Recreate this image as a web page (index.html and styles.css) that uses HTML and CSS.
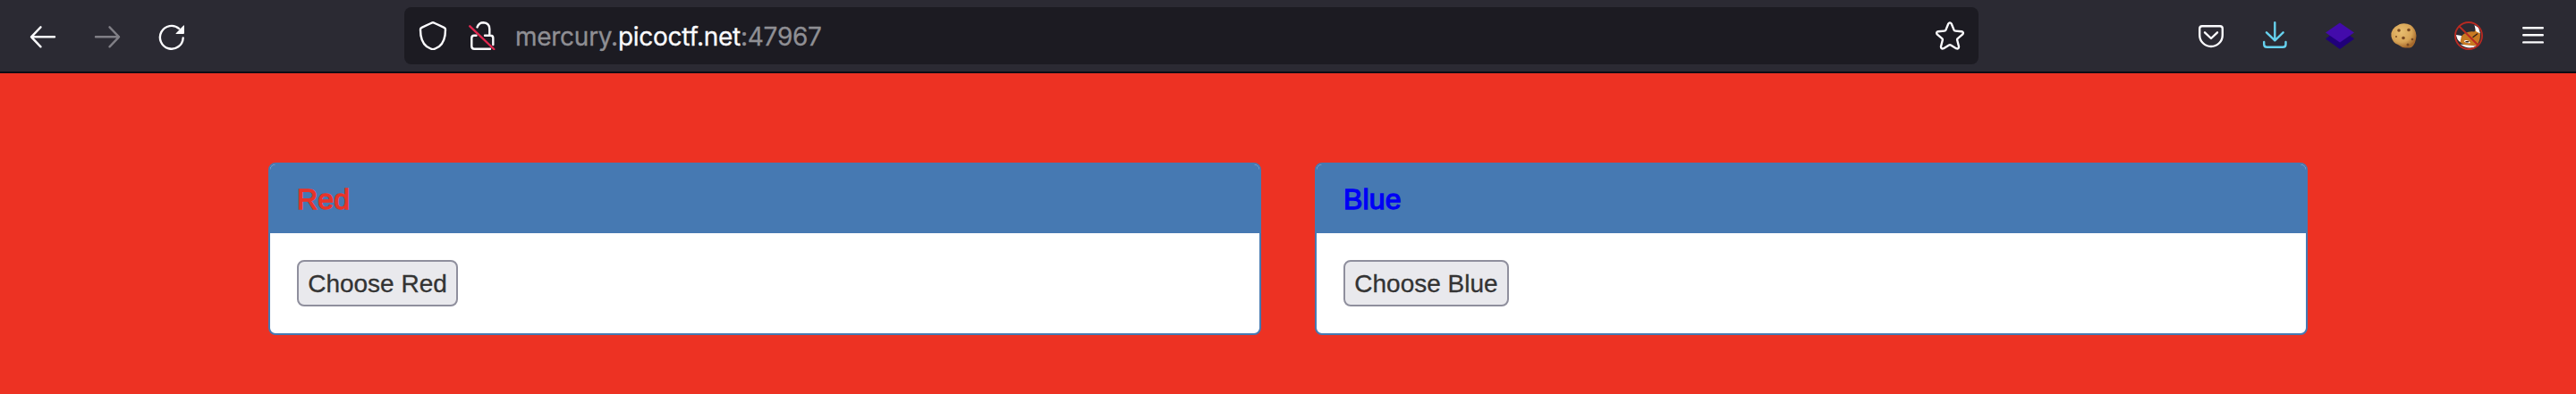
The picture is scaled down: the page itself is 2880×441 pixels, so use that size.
FILE: index.html
```html
<!DOCTYPE html>
<html lang="en">
<head>
<meta charset="utf-8">
<title>mercury.picoctf.net:47967</title>
<link rel="stylesheet" href="styles.css">
</head>
<body>
<header class="toolbar">
  <nav class="nav">
    <svg class="icon" viewBox="0 0 32 32"><path d="M29 17.300H3M13.500 6.300L3 17.300l10.500 11"/></svg>
    <svg class="icon dim" viewBox="0 0 32 32"><path d="M3 17.300h26M18.500 6.300L29 17.300l-10.500 11"/></svg>
    <svg class="icon" viewBox="0 0 32 32"><path d="M28.700 18.500A12.900 12.900 0 1 1 24.300 8.100"/><path class="solid" d="M20.500 13.600 29.200 4.400q.8-.5.800.5v8q0 1-1 1h-8q-1.100 0-.5-.8z"/></svg>
  </nav>
  <div class="urlbar">
    <svg class="icon" viewBox="0 0 32 32"><path d="M16 1.300Q16.700 1.300 28.500 6.800Q30 7.500 30 9C30 18 27.500 24.500 23 28Q18 31.200 16 31.200T9 28C4.500 24.500 2 18 2 9Q2 7.500 3.500 6.800Q15.300 1.300 16 1.300z"/></svg>
    <svg class="icon lock" viewBox="0 0 32 32"><path d="M11.500 6.500Q13.500 1.300 18.500 1.300Q25.300 1.800 25.300 8.500V15.500M10.500 15.800H8Q5.300 15.800 5.300 18.500V27.700Q5.300 30.700 8.300 30.700H26M20 15.800H26.500Q29.300 15.800 29.300 18.500V26"/><path class="strike" d="M3.300 5.300 30.300 31"/></svg>
    <div class="address">mercury.<span class="domain">picoctf.net</span>:47967</div>
    <svg class="icon star" viewBox="0 0 32 32"><path d="M14.200 2.700Q16 0 17.800 2.700L20.500 9.400Q21 10.500 22.200 10.600L29 11.200Q32.200 12 30 14.700L24.700 19.200Q23.900 20 24.200 21L26 28Q26.200 31.200 23 30.200L17 26.500Q16 26 15 26.500L9 30.200Q5.800 31.200 6 28L7.800 21Q8.100 20 7.300 19.200L2 14.700Q-.2 12 3 11.200L9.800 10.600Q11 10.500 11.500 9.400z"/></svg>
  </div>
  <div class="extensions">
    <svg class="icon" viewBox="0 0 32 32"><path d="M6 5.200H26Q28.800 5.200 28.800 8V15.200A12.800 12.800 0 0 1 3.200 15.200V8Q3.200 5.200 6 5.200zM9 12.300 16 19 23 12.300"/></svg>
    <svg class="icon download" viewBox="0 0 32 32"><path d="M15.300 1.200V21M6 12.300 15.300 21.300 24.600 12.300M3.200 23V25.500Q3.200 28.800 6.500 28.800H24.200Q27.500 28.800 27.500 25.500V23"/></svg>
    <svg class="icon art" viewBox="0 0 32 32"><path fill="#20007a" d="M0 19.500 5 15.500H27L32 19.500 16 31z"/><path fill="#430bab" d="M16 1.500 32 12.500 16 23.500 0 12.500z"/></svg>
    <svg class="icon art" viewBox="0 0 32 32"><defs><radialGradient id="dough" cx=".4" cy=".35" r=".65"><stop offset="0" stop-color="#e8be70"/><stop offset=".65" stop-color="#d7a456"/><stop offset="1" stop-color="#a5692c"/></radialGradient></defs><path fill="url(#dough)" d="M11 3Q17 1 23 4Q29 8 29.500 16Q29 25 24 29Q20 30 14 29L9 26Q3 24 1.500 17Q0 8 11 3z"/><g fill="#7a4a22"><circle cx="10" cy="10" r="1.800"/><circle cx="21" cy="9.500" r="1.800"/><circle cx="15" cy="18.500" r="1.800"/><circle cx="25" cy="20" r="1.300"/><circle cx="7" cy="17" r="1"/><circle cx="20" cy="26" r="1.500"/></g></svg>
    <svg class="icon art" viewBox="0 0 32 32"><path fill="#c87922" d="M7 17.500Q13 10 22.500 11.500L24 8.500 29 14Q29 22 25 27L15 27.500Q10 26.500 5.500 22.500z"/><path fill="#fff" d="M22.500 4 27 7 29 13.500 24 11zM2 15 8 16 6.500 23Q2.500 20 2 15zM6.500 25.500 14 26.500 25 27.500Q16 32.500 6.500 25.500z"/><path fill="#fff" d="M10.500 22Q14.500 19.500 18 24Q13 24.800 10.500 22z"/><path d="M13 22.800h2.500M21 17.500l4.500-3.500" stroke="#35221a" stroke-width="1.500"/><g fill="none" stroke="#b82a22" stroke-width="1.900"><circle cx="16" cy="16" r="15"/><path d="M5.500 5.500 26.500 26.500"/></g></svg>
    <svg class="icon" viewBox="0 0 32 32"><path d="M5.200 7.300H26.800M5.200 15.300H26.800M5.200 23.400H26.800"/></svg>
  </div>
</header>
<main class="page">
  <section class="panel">
    <h3 class="panel-heading red">Red</h3>
    <div class="panel-body"><button class="choice">Choose Red</button></div>
  </section>
  <section class="panel">
    <h3 class="panel-heading blue">Blue</h3>
    <div class="panel-body"><button class="choice choice-blue">Choose Blue</button></div>
  </section>
</main>
</body>
</html>
```
FILE: styles.css
```css
* { box-sizing: border-box; }
body {
  margin: 0;
  min-height: 441px;
  background: #ed3223;
  font-family: "Liberation Sans", Arial, sans-serif;
  overflow: hidden;
}
.toolbar {
  display: flex;
  align-items: center;
  height: 82px;
  padding: 0 32px;
  background: #2b2a33;
  border-bottom: 2px solid #0e0c14;
}
.nav, .extensions { display: flex; gap: 40px; }
.extensions { margin-left: auto; }
.icon {
  display: block;
  flex: none;
  width: 32px;
  height: 32px;
  fill: none;
  stroke: #fbfbfe;
  stroke-width: 2.4;
  stroke-linecap: round;
  stroke-linejoin: round;
}
.dim { stroke: #807f86; }
.solid { fill: #fbfbfe; stroke: none; }
.download { stroke: #66d1ee; }
.art { stroke: none; }
.strike { stroke: #e22850; }
.urlbar {
  display: flex;
  align-items: center;
  width: 1760px;
  height: 64px;
  margin-left: 244px;
  padding: 0 16px;
  border-radius: 8px;
  background: #1c1b22;
}
.lock { margin-left: 22px; }
.address {
  margin-left: 22px;
  padding-top: 2px;
  color: #8f8f94;
  font: 28px/36px Inter, sans-serif;
  letter-spacing: -0.27px;
  white-space: nowrap;
  -webkit-text-stroke: 0.3px currentColor;
}
.domain { color: #fbfbfe; }
.star { margin-left: auto; }
.page {
  display: grid;
  grid-template-columns: 1fr 1fr;
  gap: 60px;
  padding: 100px 300px 0;
}
.panel {
  height: 193px;
  border: 2px solid #4679b2;
  border-radius: 8px;
  background: #fff;
}
.panel-heading {
  height: 77px;
  margin: 0;
  padding: 21px 30px 19px;
  border-radius: 6px 6px 0 0;
  background: #4679b2;
  font-size: 32px;
  font-weight: 400;
  line-height: 37px;
  letter-spacing: 0.2px;
  -webkit-text-stroke: 1.3px currentColor;
}
.red { color: #e83328; }
.blue { color: #0000f5; }
.panel-body { padding: 30px; }
.choice {
  display: block;
  width: 180px;
  height: 52px;
  padding: 2px 0 0;
  border: 2px solid #8f8f9d;
  border-radius: 8px;
  background: #e9e9ed;
  color: #333;
  font: 28px/40px "Liberation Sans", Arial, sans-serif;
  white-space: nowrap;
  -webkit-text-stroke: 0.3px currentColor;
}
.choice-blue { width: 185px; }
```
